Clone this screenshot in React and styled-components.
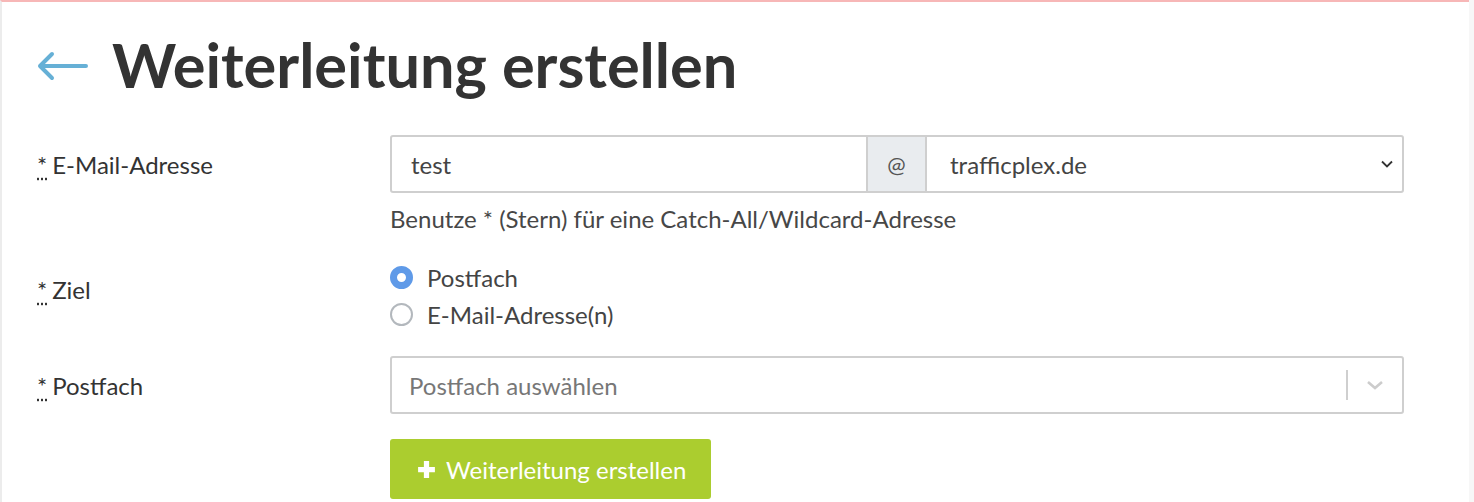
import React from "react";
import styled, { createGlobalStyle } from "styled-components";

const Global = createGlobalStyle`
  html, body { margin: 0; padding: 0; background: #fff; }
  body { font-family: Lato, "Open Sans", sans-serif; color: #333; }
  * { box-sizing: border-box; }
`;

const Frame = styled.div`
  display: flex;
  width: 1474px;
  height: 502px;
  overflow: hidden;
`;

const Main = styled.div`
  flex: 1;
  border-top: 2px solid #f7b7b7;
  border-left: 2px solid #ececec;
  padding: 0 0 0 35px;
`;

const RightStrip = styled.div`
  width: 5px;
  background: #f7f7f7;
`;

const TitleRow = styled.div`
  display: flex;
  align-items: center;
  height: 133px;
  padding-bottom: 10px;
`;

const BackArrow = styled.svg`
  width: 52px;
  height: 30px;
  margin-right: 23px;
  margin-top: 4px;
`;

const Title = styled.h1`
  margin: 0;
  font-family: Lato, sans-serif;
  font-weight: 700;
  font-size: 61.3px;
  color: #333;
`;

const Row = styled.div`
  display: grid;
  grid-template-columns: 353px 1014px;
  align-items: start;
  margin-top: ${(p) => p.$mt || 0}px;
`;

const Label = styled.label`
  font-size: 24px;
  color: #333;
  display: flex;
  align-items: center;
  height: ${(p) => p.$h || 58}px;
  margin-top: ${(p) => p.$mt || 0}px;
`;

const Req = styled.abbr`
  text-decoration: underline dotted;
  text-underline-offset: 5px;
  margin-right: 5px;
  border: none;
  cursor: help;
`;

const Control = styled.div`
  display: flex;
  flex-direction: column;
`;

const InputGroup = styled.div`
  display: flex;
  height: 58px;
  border: 2px solid #cfcfcf;
  border-radius: 3px;
  overflow: hidden;
`;

const TextInput = styled.div`
  flex: 0 0 474px;
  display: flex;
  align-items: center;
  padding-left: 19px;
  font-size: 24px;
  color: #444;
`;

const Addon = styled.div`
  flex: 0 0 61px;
  display: flex;
  align-items: center;
  justify-content: center;
  background: #e9ecef;
  border-left: 2px solid #cfcfcf;
  border-right: 2px solid #cfcfcf;
  font-size: 22px;
  color: #555;
`;

const SelectBox = styled.div`
  flex: 1;
  display: flex;
  align-items: center;
  justify-content: space-between;
  padding: 0 8px 0 23px;
  font-size: 24px;
  color: #444;
`;

const Help = styled.div`
  font-size: 24px;
  color: #474747;
  margin-top: 11px;
  line-height: 29px;
`;

const RadioList = styled.div`
  display: flex;
  flex-direction: column;
  gap: 7px;
`;

const RadioItem = styled.label`
  display: flex;
  align-items: center;
  font-size: 24px;
  color: #444;
  height: 30px;
`;

const RadioCircle = styled.span`
  width: 23px;
  height: 23px;
  border-radius: 50%;
  margin-right: 14px;
  box-sizing: border-box;
  border: ${(p) => (p.$on ? "7px solid #5f9ae8" : "2.5px solid #b3b8bd")};
  background: #fff;
`;

const ReactSelect = styled.div`
  height: 58px;
  border: 2px solid #cfcfcf;
  border-radius: 3px;
  display: flex;
  align-items: center;
  padding-left: 17px;
`;

const Placeholder = styled.div`
  flex: 1;
  font-size: 24px;
  color: #777;
`;

const Separator = styled.span`
  width: 2px;
  height: 30px;
  background: #cfcfcf;
`;

const Indicator = styled.div`
  width: 54px;
  display: flex;
  justify-content: center;
  align-items: center;
`;

const Button = styled.button`
  display: inline-flex;
  align-items: center;
  gap: 9px;
  height: 60px;
  width: 321px;
  padding: 0 0 0 26px;
  background: #abcd2f;
  border: none;
  border-radius: 3px;
  color: #fff;
  font-family: Lato, sans-serif;
  font-size: 24px;
  cursor: pointer;
`;

export default function App() {
  return (
    <>
      <Global />
      <Frame>
        <Main>
          <TitleRow>
            <BackArrow viewBox="0 0 52 30">
              <path
                d="M3 15 H49 M15 3 L3 15 L15 27"
                fill="none"
                stroke="#66b0d6"
                strokeWidth="4"
                strokeLinecap="round"
                strokeLinejoin="round"
              />
            </BackArrow>
            <Title>Weiterleitung erstellen</Title>
          </TitleRow>

          <Row>
            <Label>
              <Req title="Pflichtfeld">*</Req>E-Mail-Adresse
            </Label>
            <Control>
              <InputGroup>
                <TextInput>test</TextInput>
                <Addon>@</Addon>
                <SelectBox>
                  <span>trafficplex.de</span>
                  <svg width="14" height="10" viewBox="0 0 14 10">
                    <path d="M2 2.5 L7 7.5 L12 2.5" fill="none" stroke="#333" strokeWidth="1.8" />
                  </svg>
                </SelectBox>
              </InputGroup>
              <Help>Benutze * (Stern) für eine Catch-All/Wildcard-Adresse</Help>
            </Control>
          </Row>

          <Row $mt={29}>
            <Label $h={30} $mt={12}>
              <Req title="Pflichtfeld">*</Req>Ziel
            </Label>
            <RadioList>
              <RadioItem>
                <RadioCircle $on />
                Postfach
              </RadioItem>
              <RadioItem>
                <RadioCircle />
                E-Mail-Adresse(n)
              </RadioItem>
            </RadioList>
          </Row>

          <Row $mt={27}>
            <Label>
              <Req title="Pflichtfeld">*</Req>Postfach
            </Label>
            <ReactSelect>
              <Placeholder>Postfach auswählen</Placeholder>
              <Separator />
              <Indicator>
                <svg width="20" height="12" viewBox="0 0 20 12">
                  <path d="M3 3 L10 9 L17 3" fill="none" stroke="#cccccc" strokeWidth="2.6" />
                </svg>
              </Indicator>
            </ReactSelect>
          </Row>

          <Row $mt={25}>
            <div />
            <div>
              <Button>
                <svg width="21" height="21" viewBox="0 0 20 20">
                  <path d="M10 2 V18 M2 10 H18" stroke="#fff" strokeWidth="5" />
                </svg>
                Weiterleitung erstellen
              </Button>
            </div>
          </Row>
        </Main>
        <RightStrip />
      </Frame>
    </>
  );
}
